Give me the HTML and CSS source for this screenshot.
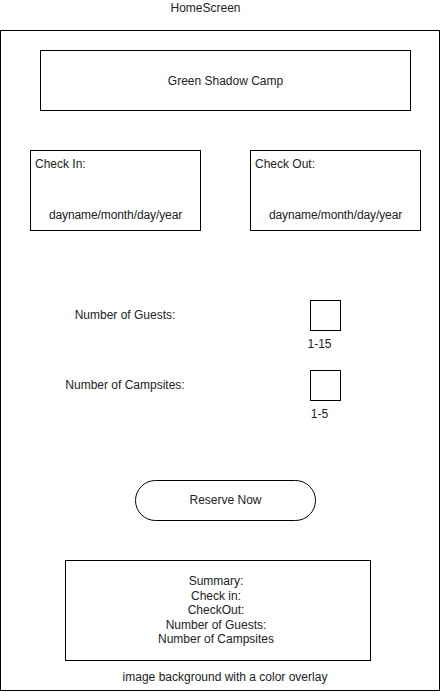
FILE: index.html
```html
<!DOCTYPE html>
<html>
<head>
  <meta name="viewport" content="width=device-width">
  <link rel="stylesheet" href="styles.css">
</head>
<body>
  <div class="caption">HomeScreen</div>
  <div class="frame">
    <div class="title-box">Green Shadow Camp</div>

    <div class="dates">
      <div class="date-box">
        <div class="date-label">Check In:</div>
        <div class="date-value">dayname/month/day/year</div>
      </div>
      <div class="date-box">
        <div class="date-label">Check Out:</div>
        <div class="date-value">dayname/month/day/year</div>
      </div>
    </div>

    <div class="counts">
      <div class="count-row">
        <div class="count-label">Number of Guests:</div>
        <div class="count-field">
          <div class="count-input"></div>
          <div class="range">1-15</div>
        </div>
      </div>
      <div class="count-row">
        <div class="count-label">Number of Campsites:</div>
        <div class="count-field">
          <div class="count-input"></div>
          <div class="range">1-5</div>
        </div>
      </div>
    </div>

    <div class="reserve">Reserve Now</div>

    <div class="summary">
      Summary:<br>
      Check in:<br>
      CheckOut:<br>
      Number of Guests:<br>
      Number of Campsites
    </div>

    <div class="footnote">image background with a color overlay</div>
  </div>
</body>
</html>
```

FILE: styles.css
```css
html, body {
  margin: 0px;
  padding: 0px;
  background-color: white;
}

body {
  font-family: "Liberation Sans", Arial, sans-serif;
  font-size: 12px;
  line-height: 14px;
  color: #222;
}

.caption {
  height: 30px;
  line-height: 16px;
  padding-right: 30px;
  text-align: center;
}

.frame {
  box-sizing: border-box;
  width: 440px;
  height: 661px;
  border: 1px solid black;
  padding-top: 19px;
}

.title-box {
  box-sizing: border-box;
  width: 371px;
  height: 61px;
  margin-left: 39px;
  border: 1px solid black;
  display: flex;
  align-items: center;
  justify-content: center;
}

.dates {
  display: flex;
  gap: 49px;
  margin-top: 39px;
  padding-left: 29px;
}

.date-box {
  box-sizing: border-box;
  width: 171px;
  height: 81px;
  border: 1px solid black;
  padding: 6px 4px 8px 4px;
  display: flex;
  flex-direction: column;
  justify-content: space-between;
}

.date-value {
  text-align: center;
  letter-spacing: -0.1px;
}

.counts {
  margin-top: 69px;
  display: flex;
  flex-direction: column;
  gap: 19px;
}

.count-row {
  display: flex;
  align-items: flex-start;
}

.count-label {
  width: 248px;
  height: 31px;
  line-height: 31px;
  text-align: center;
  margin-right: 61px;
}

.count-input {
  box-sizing: border-box;
  width: 31px;
  height: 31px;
  border: 1px solid black;
}

.range {
  width: 31px;
  margin-top: 6px;
  margin-left: -6px;
  text-align: center;
}

.reserve {
  box-sizing: border-box;
  width: 181px;
  height: 41px;
  margin-top: 59px;
  margin-left: 134px;
  padding-bottom: 2px;
  border: 1px solid black;
  border-radius: 21px;
  display: flex;
  align-items: center;
  justify-content: center;
}

.summary {
  box-sizing: border-box;
  width: 306px;
  height: 101px;
  margin-top: 39px;
  margin-left: 64px;
  padding-right: 4px;
  border: 1px solid black;
  line-height: 14.4px;
  display: flex;
  align-items: center;
  justify-content: center;
  text-align: center;
}

.footnote {
  margin-top: 9px;
  padding-left: 10px;
  text-align: center;
}
```
